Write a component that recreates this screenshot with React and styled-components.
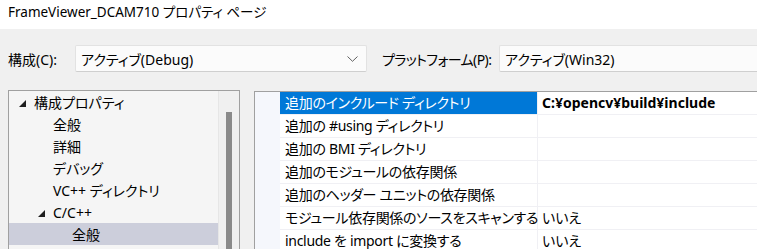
import styled, { createGlobalStyle } from 'styled-components';

const GlobalStyle = createGlobalStyle`
  html, body {
    margin: 0;
    padding: 0;
    background: #f0f0f0;
    overflow: hidden;
  }
  body {
    font-family: "Noto Sans", "Noto Sans CJK JP", sans-serif;
    font-feature-settings: "palt";
    color: #000000;
  }
  #root {
    width: 757px;
    height: 249px;
    overflow: hidden;
  }
`;

const treeItems = [
  { label: '構成プロパティ', level: 0, open: true },
  { label: '全般', level: 1 },
  { label: '詳細', level: 1 },
  { label: 'デバッグ', level: 1 },
  { label: 'VC++ ディレクトリ', level: 1 },
  { label: 'C/C++', level: 1, open: true },
  { label: '全般', level: 2, selected: true },
];

const properties = [
  { name: '追加のインクルード ディレクトリ', value: 'C:¥opencv¥build¥include', bold: true, selected: true },
  { name: '追加の #using ディレクトリ', value: '' },
  { name: '追加の BMI ディレクトリ', value: '' },
  { name: '追加のモジュールの依存関係', value: '' },
  { name: '追加のヘッダー ユニットの依存関係', value: '' },
  { name: 'モジュール依存関係のソースをスキャンする', value: 'いいえ' },
  { name: 'include を import に変換する', value: 'いいえ' },
];

const Chevron = () => (
  <svg width="11" height="6" viewBox="0 0 11 6">
    <path d="M0.5 0.5 L5.5 5.3 L10.5 0.5" fill="none" stroke="#606060" strokeWidth="1" />
  </svg>
);

const Expander = () => (
  <svg width="7" height="7" viewBox="0 0 7 7">
    <path d="M7 0 L7 7 L0 7 Z" fill="#1e1e1e" />
  </svg>
);

export default function App() {
  return (
    <>
      <GlobalStyle />
      <TitleBar>FrameViewer_DCAM710 プロパティ ページ</TitleBar>
      <Body>
        <ConfigRow>
          <FieldLabel $width={67}>構成(C):</FieldLabel>
          <Select $width={292}>
            <span>アクティブ(Debug)</span>
            <Chevron />
          </Select>
          <FieldLabel $width={117} $offset={15} $tight>プラットフォーム(P):</FieldLabel>
          <Select $open>
            <span>アクティブ(Win32)</span>
          </Select>
        </ConfigRow>
        <Panels>
          <TreePanel>
            <TreeList>
              {treeItems.map((item, i) => (
                <TreeRow key={i} $level={item.level} $selected={item.selected}>
                  <ExpanderSlot>{item.open && <Expander />}</ExpanderSlot>
                  {item.label}
                </TreeRow>
              ))}
            </TreeList>
            <ScrollTrack>
              <ScrollThumb />
            </ScrollTrack>
          </TreePanel>
          <GridPanel>
            <Margin />
            <Rows>
              {properties.map((p, i) => (
                <PropRow key={i}>
                  <NameCell $selected={p.selected}>{p.name}</NameCell>
                  <ValueCell $bold={p.bold}>{p.value}</ValueCell>
                </PropRow>
              ))}
            </Rows>
          </GridPanel>
        </Panels>
      </Body>
    </>
  );
}

const TitleBar = styled.div`
  height: 29px;
  background: #ffffff;
  padding-left: 8px;
  font-size: 13.5px;
  line-height: 24px;
  white-space: nowrap;
`;

const Body = styled.div`
  padding: 16px 0 0 8px;
`;

const ConfigRow = styled.div`
  display: flex;
  align-items: center;
  height: 27px;
  white-space: nowrap;
`;

const FieldLabel = styled.div`
  width: ${(p) => p.$width}px;
  margin-left: ${(p) => p.$offset || 0}px;
  flex-shrink: 0;
  font-size: 14px;
  letter-spacing: ${(p) => (p.$tight ? '-0.6px' : '0')};
`;

const Select = styled.div`
  box-sizing: border-box;
  width: ${(p) => (p.$width ? `${p.$width}px` : 'auto')};
  flex: ${(p) => (p.$open ? 1 : '0 0 auto')};
  height: 27px;
  display: flex;
  align-items: center;
  justify-content: space-between;
  padding: 0 8px 0 5px;
  background: #fbfbfb;
  border: 1px solid #e2e2e2;
  border-bottom-color: #cfcfcf;
  border-right: ${(p) => (p.$open ? 'none' : '1px solid #e2e2e2')};
  border-radius: ${(p) => (p.$open ? '2px 0 0 2px' : '2px')};
  font-size: 14px;
`;

const Panels = styled.div`
  display: flex;
  align-items: flex-start;
  margin-top: 18px;
  gap: 14px;
`;

const TreePanel = styled.div`
  box-sizing: border-box;
  width: 232px;
  height: 159px;
  flex-shrink: 0;
  display: flex;
  border: 1px solid #a0a0a0;
  border-bottom: none;
  background: #f5f5f5;
`;

const TreeList = styled.div`
  width: 209px;
  border-right: 1px solid #e6e6e6;
`;

const TreeRow = styled.div`
  display: flex;
  align-items: center;
  height: 22px;
  padding-left: ${(p) => 10 + p.$level * 19}px;
  background: ${(p) => (p.$selected ? '#cccedb' : 'transparent')};
  font-size: 14px;
  white-space: nowrap;
`;

const ExpanderSlot = styled.span`
  display: inline-flex;
  width: 15px;
  padding-top: 2px;
`;

const ScrollTrack = styled.div`
  flex: 1;
  background: #f0f0f0;
  padding: 21px 0 0 7px;
  overflow: hidden;
`;

const ScrollThumb = styled.div`
  width: 6px;
  height: 200px;
  background: #8a8a8a;
`;

const GridPanel = styled.div`
  flex: 1;
  display: flex;
  margin-top: 1px;
  height: 158px;
  overflow: hidden;
  border-top: 1px solid #a0a0a0;
  border-left: 1px solid #a0a0a0;
  background: #ffffff;
`;

const Margin = styled.div`
  width: 25px;
  flex-shrink: 0;
  background: #f5f7fc;
`;

const Rows = styled.div`
  flex: 1;
`;

const PropRow = styled.div`
  display: flex;
  height: 23px;
  box-sizing: border-box;
  border-bottom: 1px solid #f0f0f4;
  font-size: 14px;
  white-space: nowrap;
`;

const NameCell = styled.div`
  box-sizing: border-box;
  width: 258px;
  flex-shrink: 0;
  padding-left: 5px;
  line-height: 22px;
  letter-spacing: -0.3px;
  background: ${(p) => (p.$selected ? '#0078d7' : '#ffffff')};
  color: ${(p) => (p.$selected ? '#ffffff' : '#000000')};
  border-right: 1px solid #f0f0f4;
`;

const ValueCell = styled.div`
  flex: 1;
  padding-left: 4px;
  line-height: 22px;
  font-weight: ${(p) => (p.$bold ? 700 : 400)};
`;
